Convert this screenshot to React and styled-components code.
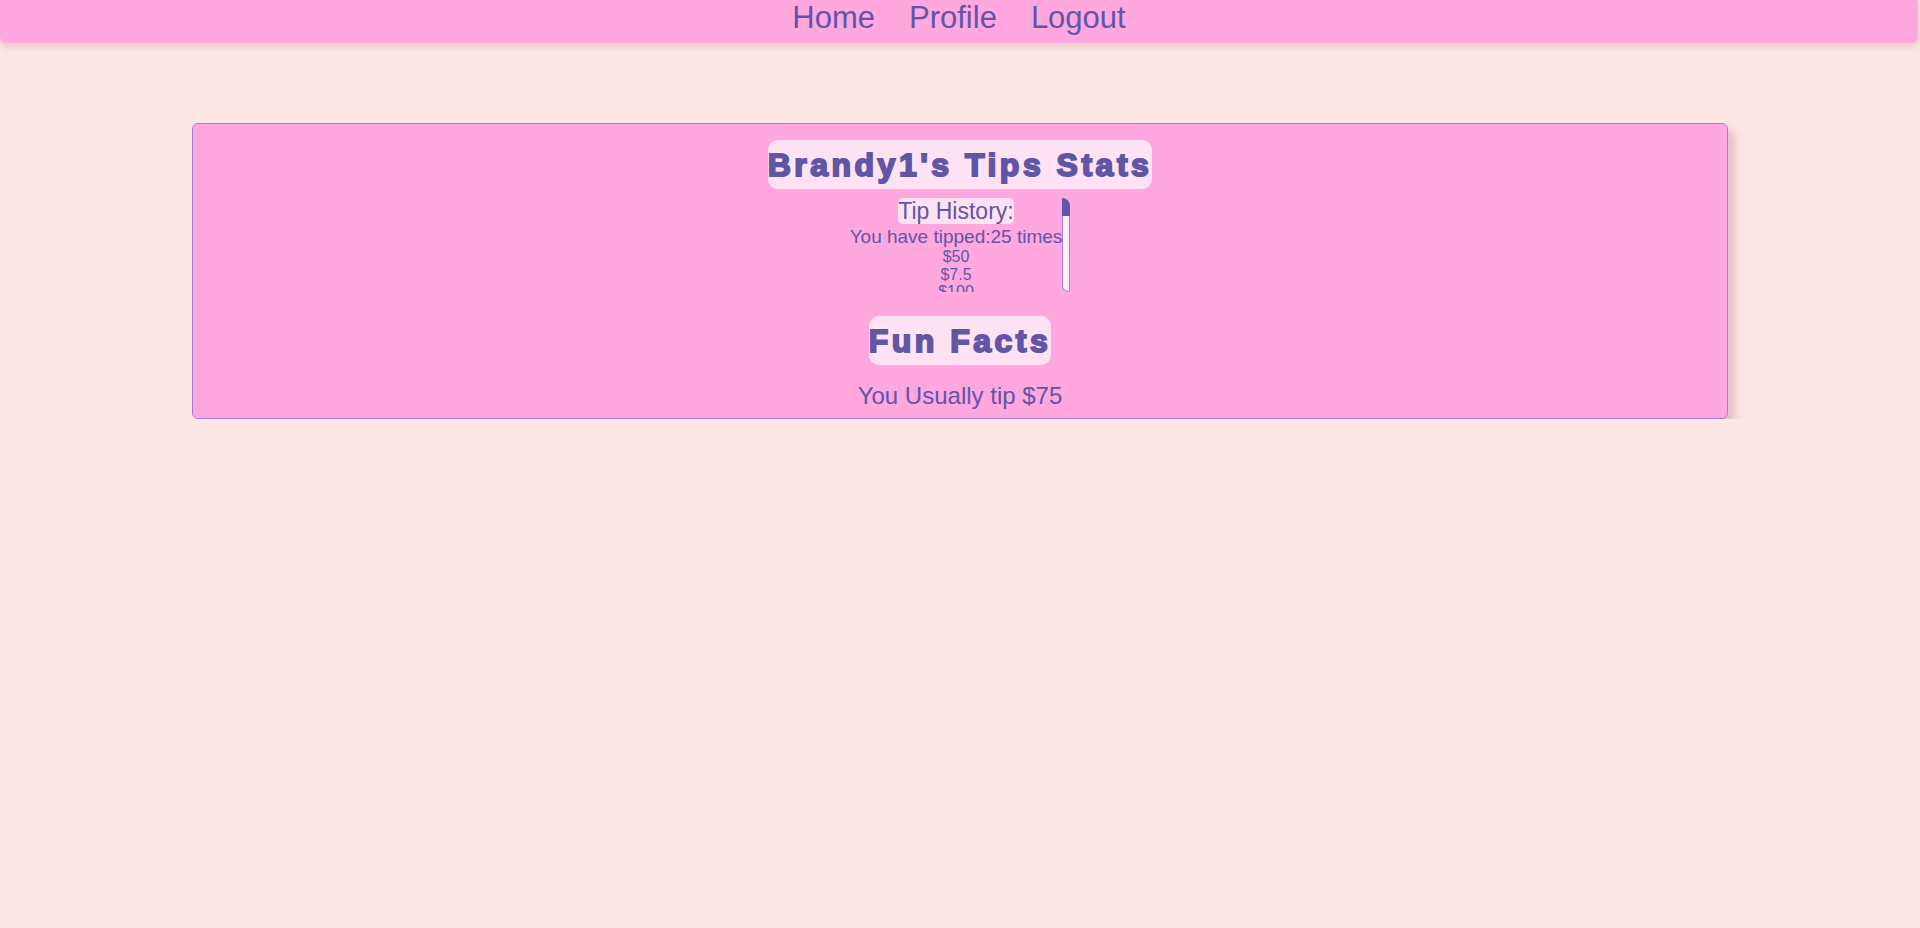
import React from 'react';
import styled, { createGlobalStyle } from 'styled-components';

const tips = [
    50, 7.5, 100, 75, 20, 15, 75, 30, 75, 10, 25, 75, 60,
    75, 40, 12.5, 75, 80, 5, 75, 45, 75, 35, 75, 90,
];

const GlobalStyle = createGlobalStyle`
    body{
        margin: 0;
        background: #ffe6e6;
        font-family: "Liberation Sans", Arial, sans-serif;
        color: #6155a6;
    }
`;

const Nav = styled.nav`
    width: calc(100% - 2px);
    height: 43px;
    background: #ffa8e0;
    border-radius: 0 0 6px 6px;
    box-shadow: 0 4px 6px rgba(170, 120, 120, 0.25);
    display: flex;
    justify-content: center;
    gap: 34px;
    a{
        font-size: 31px;
        line-height: 36px;
        color: #6155a6;
        text-decoration: none;
    }
`;

const Card = styled.section`
    width: 1534px;
    margin: 80px auto 0;
    padding: 16px 0 8px;
    background: #ffa8e0;
    border: 1px solid #a07ee0;
    border-radius: 6px;
    box-shadow: 7px 7px 8px rgba(150, 110, 110, 0.3);
    display: flex;
    flex-direction: column;
    align-items: center;
`;

const Title = styled.h1`
    margin: ${(p) => p.$gap || 0}px 0 0;
    padding: 7px 0 6px;
    font-size: 32px;
    font-weight: 900;
    letter-spacing: 3.5px;
    -webkit-text-stroke: 1.9px #6155a6;
    background: #ffe3f4;
    border-radius: 10px;
    line-height: 36px;
`;

const HistoryBox = styled.div`
    margin-top: 9px;
    height: 94px;
    display: flex;
`;

const Scroll = styled.div`
    height: 94px;
    overflow-y: auto;
    text-align: center;
    scrollbar-width: none;
    &::-webkit-scrollbar{
        display: none;
    }
`;

const Bar = styled.div`
    width: 8px;
    display: flex;
    flex-direction: column;
`;

const Thumb = styled.div`
    height: 18px;
    background: #6155a6;
    border-radius: 0 8px 0 0;
`;

const Track = styled.div`
    flex: 1;
    background: #fdf0f8;
    border: 1px solid #a07ee0;
    border-top: 0;
    border-radius: 0 0 2px 6px;
`;

const Label = styled.span`
    display: inline-block;
    font-size: 23px;
    line-height: 26px;
    background: #ffe3f4;
    border-radius: 5px;
`;

const Count = styled.div`
    font-size: 19px;
    line-height: 23px;
    margin-top: 1px;
`;

const Tip = styled.div`
    font-size: 16px;
    line-height: 17.5px;
`;

const Fact = styled.p`
    margin: 17px 0 0;
    font-size: 24px;
    line-height: 28px;
`;

export default function App() {
    return (
        <>
            <GlobalStyle />
            <Nav>
                <a href='#'>Home</a>
                <a href='#'>Profile</a>
                <a href='#'>Logout</a>
            </Nav>
            <Card>
                <Title>Brandy1's Tips Stats</Title>
                <HistoryBox>
                    <Scroll>
                        <Label>Tip History:</Label>
                        <Count>You have tipped:{tips.length} times</Count>
                        {tips.map((t, i) => (
                            <Tip key={i}>${t}</Tip>
                        ))}
                    </Scroll>
                    <Bar>
                        <Thumb />
                        <Track />
                    </Bar>
                </HistoryBox>
                <Title $gap={24}>Fun Facts</Title>
                <Fact>You Usually tip $75</Fact>
            </Card>
        </>
    );
}
